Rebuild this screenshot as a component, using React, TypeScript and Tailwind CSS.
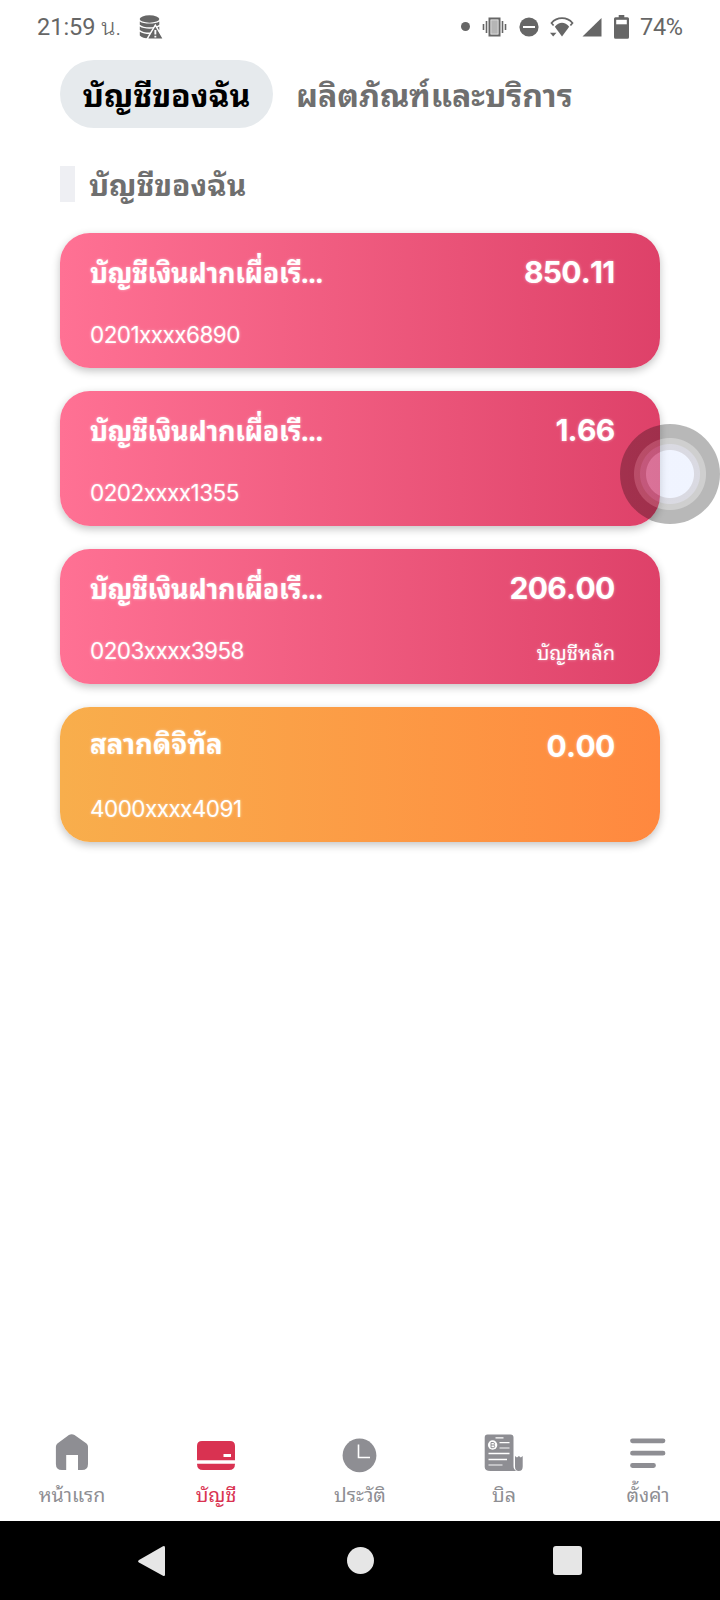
import type { ReactNode } from "react";

type Account = {
  name: string;
  number: string;
  balance: string;
  note?: string;
  tone: string;
  nameClass: string;
};

const pink = "bg-linear-to-r from-[#ff7194] to-[#de4169]";
const orange = "bg-linear-to-r from-[#f8ae4c] to-[#ff883f]";
const longName = "mt-[18px] text-[27px] tracking-[-0.35px]";
const shortName = "mt-[15px] text-[27.500px]";

const accounts: Account[] = [
  { name: "บัญชีเงินฝากเผื่อเรี...", number: "0201xxxx6890", balance: "850.11", tone: pink, nameClass: longName },
  { name: "บัญชีเงินฝากเผื่อเรี...", number: "0202xxxx1355", balance: "1.66", tone: pink, nameClass: longName },
  { name: "บัญชีเงินฝากเผื่อเรี...", number: "0203xxxx3958", balance: "206.00", note: "บัญชีหลัก", tone: pink, nameClass: longName },
  { name: "สลากดิจิทัล", number: "4000xxxx4091", balance: "0.00", tone: orange, nameClass: shortName },
];

function StatusBar() {
  return (
    <header className="flex h-[53px] items-center justify-between pl-[37px] pr-[37px] text-[#666]">
      <div className="flex items-center">
        <span className="w-[102px] whitespace-nowrap pt-px font-['Roboto','Noto_Sans_Thai_Looped',sans-serif] text-[23.500px] leading-[53px]">21:59 <span className="font-light">น.</span></span>
        <svg className="h-6 w-6" viewBox="0 0 24 24" fill="#666">
          <ellipse cx="10.500" cy="4" rx="9.800" ry="3.700" />
          <path d="M.8 6.400c3.700 2.800 15.700 2.800 19.500 0v3.400C17 13.200 4 13.200 .8 9.800zM.8 11.600c3.700 2.800 15.700 2.800 19.500 0v3.400C17 18.400 4 18.400 .8 15zM.8 16.800c3.700 2.800 12 2.800 15 1.700v4.300C9 24 3 23 .8 20.400z" />
          <path d="M16.300 10.500 24 23.600H8.500z" stroke="#fff" strokeWidth="1.800" />
          <path d="M16.300 11.500 23.300 23.600H9.300z" />
          <path d="M15.400 15h1.900v4.500h-1.900zM15.400 20.700h1.900v1.800h-1.900z" fill="#fff" />
        </svg>
      </div>
      <div className="flex items-center">
        <i className="mr-[12px] h-[9px] w-[9px] rounded-full bg-[#666]" />
        <svg className="mr-[12px] h-[20px] w-[25px]" viewBox="0 0 25 20">
          <path d="M1.500 7v6M4.500 4v12M20.500 4v12M23.500 7v6" stroke="#666" strokeWidth="1.600" />
          <path d="M7.500 1.500h10v17h-10z" fill="#fff" stroke="#666" strokeWidth="2" />
          <path d="M9.200 3.200h6.600v13.600H9.200z" fill="#b5b5b5" />
        </svg>
        <svg className="mr-[11px] h-[20px] w-[20px]" viewBox="0 0 20 20">
          <circle cx="10" cy="10" r="9.600" fill="#666" />
          <path d="M4 10h12" stroke="#fff" strokeWidth="2" />
        </svg>
        <svg className="mr-[8px] h-[20px] w-[24px]" viewBox="0 0 24 20" fill="#666">
          <path d="M12 19.500 4.800 9.700C9 4.500 15 4.500 19.200 9.700z" />
          <path d="M3.600 8.500 1.500 6C7-.4 17-.4 22.500 6L20.400 8.500" fill="none" stroke="#666" strokeWidth="1.700" />
          <path d="M0 15.800h6.500L3.200 19.600z" />
        </svg>
        <svg className="mr-[12px] h-[20px] w-[20px]" viewBox="0 0 20 20">
          <path d="M19.500 1v18.500H.5z" fill="#666" />
        </svg>
        <svg className="mr-[11px] h-[24px] w-[15px]" viewBox="0 0 15 24">
          <path d="M4.700 0h5.600v2.300H13.500q1.500 0 1.500 1.500v18.500q0 1.500-1.500 1.500H1.500Q0 23.800 0 22.300V3.800q0-1.500 1.500-1.500h3.200z" fill="#666" />
          <path d="M2.200 4.800h10.600v4.500H2.200z" fill="#fff" />
        </svg>
        <span className="w-[43px] whitespace-nowrap pt-px font-['Roboto',sans-serif] text-[23.500px] leading-[53px] tracking-[-0.3px]">74%</span>
      </div>
    </header>
  );
}

function AccountCard({ a }: { a: Account }) {
  return (
    <article className={`flex h-[135px] justify-between rounded-[30px] pl-[30px] pr-[45px] text-white shadow-[0_3px_8px_rgba(0,0,0,0.24)] [text-shadow:0_0_3px_rgba(255,255,255,0.5)] ${a.tone}`}>
      <div className="flex flex-col whitespace-nowrap">
        <h3 className={`h-[40px] leading-[40px] font-bold ${a.nameClass}`}>{a.name}</h3>
        <p className="mt-auto mb-[17px] font-['Inter',sans-serif] text-[22.500px] leading-[32px] tracking-[-0.55px]">{a.number}</p>
      </div>
      <div className="flex flex-col text-right">
        <strong className="mt-[19px] mr-[0.500px] font-['Inter',sans-serif] text-[30px] leading-[40px] font-bold tracking-[-0.7px] [font-kerning:none]">{a.balance}</strong>
        {a.note && <span className="mt-auto mb-[17px] text-[20px] leading-[32px]">{a.note}</span>}
      </div>
    </article>
  );
}

function NavItem({ label, active, children }: { label: string; active?: boolean; children: ReactNode }) {
  return (
    <a className={`flex w-36 flex-col items-center ${active ? "text-[#d93251]" : "text-[#8e8e93]"}`}>
      <svg className="h-[44px] w-[44px]" viewBox="0 0 44 44" fill="currentColor">{children}</svg>
      <span className="mt-[3px] text-[19.600px] leading-[32px] whitespace-nowrap">{label}</span>
    </a>
  );
}

export default function App() {
  return (
    <div className="relative flex h-[1600px] w-[720px] flex-col overflow-hidden bg-white font-['Noto_Sans_Thai_Looped','Loma',sans-serif]">
      <StatusBar />
      <nav className="mt-[7px] ml-[60px] flex h-[68px] items-center whitespace-nowrap">
        <span className="flex h-[68px] w-[213px] items-center justify-center rounded-full bg-[#e6eaed] pb-[3px] text-[32px] leading-[65px] font-bold text-black">บัญชีของฉัน</span>
        <span className="ml-[23px] pb-[3px] text-[32px] leading-[65px] font-bold text-[#6f6f6f]">ผลิตภัณฑ์และบริการ</span>
      </nav>
      <h2 className="mt-[38px] ml-[60px] flex h-[36px] text-[30px] leading-[34px] font-bold text-[#6f6f6f]">
        <i className="mr-[14px] h-[36px] w-[15px] bg-[#eeeff3]" />
        บัญชีของฉัน
      </h2>
      <main className="mt-[31px] flex flex-col gap-[23px] px-[60px]">
        {accounts.map((a) => <AccountCard key={a.number} a={a} />)}
      </main>
      <footer className="mt-auto">
        <div className="flex h-[91px]">
          <NavItem label="หน้าแรก">
            <path d="M18.900 5q2.800-1.600 5.600 0l12 8.500q1.500 1.200 1.500 3.200V34q0 6-6 6h-4V25H16.200v15h-4.300q-6 0-6-6V16.700q0-2 1.500-3.200z" />
          </NavItem>
          <NavItem label="บัญชี" active>
            <path d="M3 30.300V16q0-5 5-5h28q5 0 5 5v14.300zM3 33.700h38Q41 40 35 40H9Q3 40 3 33.700z" />
            <path d="M29.500 24h7.500v3h-7.500z" fill="#fff" />
          </NavItem>
          <NavItem label="ประวัติ">
            <circle cx="21.500" cy="25.400" r="16.900" />
            <path d="M20.500 14.500v13h11.500" fill="none" stroke="#fff" strokeWidth="1.600" />
          </NavItem>
          <NavItem label="บิล">
            <path d="M5.500 4.400h23q3 0 3 3V36q0 3.500 3 5h-26q-5.800 0-5.800-4V7.400q0-3 2.800-3z" />
            <path d="M33 26l2 1.500 1.900-1.500 1.900 1.500 1.900-1.500v10.500q0 4.500-4 4.500-3.700 0-3.700-4.500z" />
            <circle cx="10.600" cy="15" r="4.700" fill="#fff" />
            <path d="M9 12.500h2.200q1.300 0 1.300 1.300 0 1-.9 1.200 1.100.2 1.100 1.400Q12.700 17.700 11.300 17.700H9zM9 15h2.500" fill="none" stroke="currentColor" strokeWidth="1" />
            <path d="M13.500 7.800h8M17.500 12.600h10M6.500 23.500h21M6.500 29.500h18.500" fill="none" stroke="#fff" strokeWidth="1.300" />
            <path d="M17.500 18h10M6.500 35h14" fill="none" stroke="#d4d4d6" strokeWidth="1.500" />
          </NavItem>
          <NavItem label="ตั้งค่า">
            <path d="M6.500 10.800h30.500M6.500 23.200h30.500M6.500 35.500h21" fill="none" stroke="currentColor" strokeWidth="4.800" strokeLinecap="round" />
          </NavItem>
        </div>
        <div className="flex h-[79px] items-center bg-black pl-[138px]">
          <svg className="h-[32px] w-[27px]" viewBox="0 0 27 32" fill="#e6e6e6"><path d="M25 1.300q2-1 2 1.200v27q0 2.200-2 1.200L1 17.500q-1.800-1.300 0-2.600z" /></svg>
          <i className="ml-[182px] h-[27px] w-[27px] rounded-full bg-[#e6e6e6]" />
          <i className="ml-[179px] h-[29px] w-[29px] rounded-[3px] bg-[#e6e6e6]" />
        </div>
      </footer>
      <div className="absolute top-[424px] left-[620px] h-[100px] w-[100px] rounded-full bg-[radial-gradient(circle,rgba(207,220,255,0.31)_23.5px,rgba(135,135,161,0.31)_24.5px,rgba(135,135,161,0.31)_29.5px,rgba(100,100,100,0.31)_30.5px,rgba(100,100,100,0.31)_35.5px,rgba(0,0,0,0.28)_36.5px)]" />
    </div>
  );
}
